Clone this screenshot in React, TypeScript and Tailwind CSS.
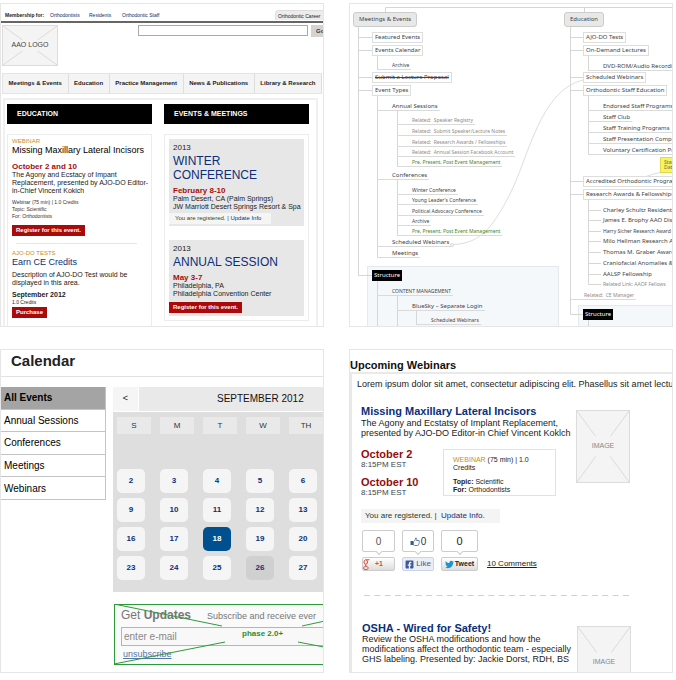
import React from "react";
import { FaFacebookSquare, FaTwitter } from "react-icons/fa";

const ARIAL = "font-['Liberation_Sans',Arial,sans-serif]";

function Thumb({ label, children }: { label: string; children: React.ReactNode }) {
  return (
    <section
      aria-label={label}
      className="relative aspect-square min-h-0 min-w-0 overflow-hidden border border-[#e6e6e6] bg-white"
    >
      {children}
    </section>
  );
}

function Placeholder({ label, className }: { label: string; className: string }) {
  return (
    <div className={`relative flex shrink-0 items-center justify-center border border-[#dcdcdc] bg-[#f4f4f4] ${className}`}>
      <svg className="absolute inset-0 h-full w-full" viewBox="0 0 100 100" preserveAspectRatio="none" aria-hidden="true">
        <path
          d="M0 0L36 36M64 64L100 100M100 0L64 36M36 64L0 100"
          stroke="#dadada"
          strokeWidth="1"
          vectorEffect="non-scaling-stroke"
          fill="none"
        />
      </svg>
      <span className="relative">{label}</span>
    </div>
  );
}

function RedButton({ children, className }: { children: React.ReactNode; className: string }) {
  return (
    <button className={`block h-[11px] bg-[#ab0a0a] px-1 text-[6px] leading-[11px] font-bold text-white ${className}`}>
      {children}
    </button>
  );
}

function HomePage() {
  return (
    <Thumb label="Home page wireframe">
      <div className="flex items-center border-b-2 border-[#666] pt-[6px] pb-px text-[5px] leading-[10px] whitespace-nowrap text-[#0b2f6b]">
        <span className="ml-1 w-[45px] font-bold text-[#222]">Membership for:</span>
        <a href="#orthodontists" className="w-[39px]">Orthodontists</a>
        <a href="#residents" className="w-[33px]">Residents</a>
        <a href="#staff">Orthodontic Staff</a>
        <a href="#careers" className="-mr-1 ml-auto h-[10px] w-[52px] rounded-t-sm border border-b-0 border-[#ddd] bg-[#ececec] pl-[2px] text-[#222]">
          Orthodontic Career
        </a>
      </div>
      <div className="flex items-start pt-[2px]">
        <Placeholder label="AAO LOGO" className="ml-px h-[41px] w-[56px] text-[7px] text-[#444]" />
        <input aria-label="Search" className="ml-[80px] h-[11px] min-w-0 grow border border-[#aaa] bg-white px-1 text-[7px]" />
        <button className="-mr-1 ml-[3px] h-[12px] w-[16px] shrink-0 bg-[#d3d3d3] pl-[5px] text-left text-[6px] font-bold text-[#333]">
          Go
        </button>
      </div>
      <nav className="mt-[7px] mr-px ml-px flex h-[21px] border border-r-0 border-[#e4e4e4] bg-[#f4f4f4] text-[6px] font-bold whitespace-nowrap text-[#222]">
        {["Meetings & Events", "Education", "Practice Management", "News & Publications", "Library & Research"].map((t) => (
          <a key={t} href="#nav" className="flex flex-auto items-center justify-center border-r border-[#dedede] px-1">
            {t}
          </a>
        ))}
      </nav>
      <div className="mt-1 mr-[5px] ml-[2px] grid grid-cols-2 gap-3 border-2 border-[#f0f0f0] pt-1 pr-[7px] pl-[2px]">
        <div>
          <h2 className="h-5 bg-black pl-[10px] text-[7px] leading-[20px] font-bold text-white">EDUCATION</h2>
          <div className="mt-[10px] border border-[#ececec] px-1 pt-[3px] pb-8 text-[#222]">
            <p className="text-[6px] leading-[7px] text-[#c8901a]">WEBINAR</p>
            <h3 className="text-[9px] leading-[10px] whitespace-nowrap text-black">Missing Maxillary Lateral Incisors</h3>
            <p className="mt-[7px] text-[8px] leading-[9px] font-bold text-[#a80c0c]">October 2 and 10</p>
            <p className="text-[7px] leading-[8px] whitespace-nowrap">
              The Agony and Ecstacy of Impant
              <br />
              Replacement, presented by AJO-DO Editor-
              <br />
              in-Chief Vincent Kokich
            </p>
            <p className="mt-1 text-[5px] leading-[7px] text-[#333]">
              Webinar (75 min) | 1.0 Credits
              <br />
              Topic: Scientific
              <br />
              For: Orthodontists
            </p>
            <RedButton className="mt-[5px]">Register for this event.</RedButton>
            <div className="mt-[7px] mr-[10px] ml-1 h-px bg-[#e6e6e6]" />
            <p className="mt-[6px] text-[6px] leading-[7px] text-[#c8901a]">AJO-DO TESTS</p>
            <h3 className="text-[9px] leading-[10px] text-[#0b2f7a]">Earn CE Credits</h3>
            <p className="mt-1 text-[7px] leading-[8px] whitespace-nowrap">
              Description of AJO-DO Test would be
              <br />
              displayed in this area.
            </p>
            <p className="mt-1 text-[7px] leading-[8px] font-bold">September 2012</p>
            <p className="text-[5px] leading-[7px]">1.0 Credits</p>
            <RedButton className="mt-px">Purchase</RedButton>
          </div>
        </div>
        <div>
          <h2 className="h-5 bg-black pl-[10px] text-[7px] leading-[20px] font-bold text-white">EVENTS &amp; MEETINGS</h2>
          <div className="mt-[10px] border border-[#ececec] p-1 text-[7px] leading-[8px] whitespace-nowrap text-[#222]">
            <div className="bg-[#e7e7e7] pt-[5px] pb-[2px]">
              <div className="pl-1">
                <p className="text-[8px] leading-[8px]">2013</p>
                <h3 className="mt-[2px] text-[12px] leading-[14px] text-[#0b2f7a]">
                  WINTER
                  <br />
                  CONFERENCE
                </h3>
                <p className="mt-1 text-[8px] leading-[9px] font-bold text-[#a80c0c]">February 8-10</p>
                <p>Palm Desert, CA (Palm Springs)</p>
                <p>JW Marriott Desert Springs Resort &amp; Spa</p>
              </div>
              <p className="mt-[2px] h-[11px] w-[102px] bg-[#f5f5f5] pl-[6px] text-[6px] leading-[11px] text-[#1f4a1f]">
                You are registered. | <a href="#update" className="text-[#0b2f7a]">Update Info</a>
              </p>
            </div>
            <div className="mt-[14px] bg-[#e7e7e7] pt-[5px] pb-[3px]">
              <div className="pl-1">
                <p className="text-[8px] leading-[8px]">2013</p>
                <h3 className="mt-[2px] text-[12px] leading-[14px] text-[#0b2f7a]">ANNUAL SESSION</h3>
                <p className="mt-1 text-[8px] leading-[9px] font-bold text-[#a80c0c]">May 3-7</p>
                <p>Philadelphia, PA</p>
                <p>Philadelphia Convention Center</p>
              </div>
              <RedButton className="mt-1">Register for this event.</RedButton>
            </div>
          </div>
        </div>
      </div>
    </Thumb>
  );
}

type Kind = "root" | "box" | "struck" | "dark" | "line" | "plain";
type MapNode = { t: string; k: Kind; x: number; y: number; pad?: number; small?: boolean; tone?: "green" | "dim" };

const kindClass: Record<Kind, string> = {
  root: "h-[15px] rounded-[3px] border border-[#ccc] bg-[#e8e8e8] px-[5px] leading-[13px]",
  box: "h-[11px] border border-[#dedede] bg-white px-[2px] leading-[9px]",
  struck: "h-[11px] border border-[#dedede] bg-white px-[2px] leading-[9px] line-through",
  dark: "h-[11px] bg-black px-[2px] leading-[11px] text-white",
  line: "h-[9px] border-b border-[#dadada] pr-[2px] leading-[8px]",
  plain: "h-[8px] leading-[8px]",
};

const nodes: MapNode[] = [
  { t: "Meetings & Events", k: "root", x: 3, y: 8 },
  { t: "Featured Events", k: "box", x: 22, y: 28 },
  { t: "Events Calendar", k: "box", x: 22, y: 41 },
  { t: "Archive", k: "line", x: 27, y: 57, pad: 15, small: true },
  { t: "Submit a Lecture Proposal", k: "struck", x: 22, y: 68 },
  { t: "Event Types", k: "box", x: 22, y: 81 },
  { t: "Annual Sessions", k: "line", x: 27, y: 98, pad: 15 },
  { t: "Related:  Speaker Registry", k: "line", x: 47, y: 112, pad: 15, small: true, tone: "dim" },
  { t: "Related:  Submit Speaker/Lecture Notes", k: "line", x: 47, y: 123, pad: 15, small: true, tone: "dim" },
  { t: "Related:  Research Awards / Fellowships", k: "line", x: 47, y: 134, pad: 15, small: true, tone: "dim" },
  { t: "Related:  Annual Session Facebook Account", k: "line", x: 47, y: 144, pad: 15, small: true, tone: "dim" },
  { t: "Pre, Present, Post Event Management", k: "line", x: 47, y: 154, pad: 15, small: true, tone: "green" },
  { t: "Conferences", k: "line", x: 27, y: 167, pad: 15 },
  { t: "Winter Conference", k: "line", x: 47, y: 182, pad: 15, small: true },
  { t: "Young Leader's Conference", k: "line", x: 47, y: 192, pad: 15, small: true },
  { t: "Political Advocacy Conference", k: "line", x: 47, y: 203, pad: 15, small: true },
  { t: "Archive", k: "line", x: 47, y: 213, pad: 15, small: true },
  { t: "Pre, Present, Post Event Management", k: "line", x: 47, y: 223, pad: 15, small: true, tone: "green" },
  { t: "Scheduled Webinars", k: "line", x: 27, y: 234, pad: 15 },
  { t: "Meetings", k: "line", x: 27, y: 245, pad: 15 },
  { t: "Structure", k: "dark", x: 22, y: 266 },
  { t: "CONTENT MANAGEMENT", k: "line", x: 27, y: 283, pad: 15, small: true },
  { t: "BlueSky – Separate Login", k: "line", x: 47, y: 298, pad: 15 },
  { t: "Scheduled Webinars", k: "line", x: 66, y: 312, pad: 15, small: true },
  { t: "Education", k: "root", x: 214, y: 8 },
  { t: "AJO-DO Tests", k: "box", x: 233, y: 28 },
  { t: "On-Demand Lectures", k: "box", x: 233, y: 41 },
  { t: "DVD-ROM/Audio Recordings", k: "line", x: 238, y: 58, pad: 15 },
  { t: "Scheduled Webinars", k: "box", x: 233, y: 68 },
  { t: "Orthodontic Staff Education", k: "box", x: 233, y: 81 },
  { t: "Endorsed Staff Programs", k: "line", x: 238, y: 98, pad: 15 },
  { t: "Staff Club", k: "line", x: 238, y: 109, pad: 15 },
  { t: "Staff Training Programs", k: "line", x: 238, y: 120, pad: 15 },
  { t: "Staff Presentation Compe", k: "line", x: 238, y: 131, pad: 15 },
  { t: "Voluntary Certification Pro", k: "line", x: 238, y: 142, pad: 15 },
  { t: "Accredited Orthodontic Programs", k: "box", x: 233, y: 172 },
  { t: "Research Awards & Fellowships", k: "box", x: 233, y: 185 },
  { t: "Charley Schultz Resident", k: "plain", x: 253, y: 202 },
  { t: "James E. Brophy AAO Dis", k: "plain", x: 253, y: 212 },
  { t: "Harry Sicher Research Award", k: "plain", x: 253, y: 223, small: true },
  { t: "Milo Hellman Research Aw", k: "plain", x: 253, y: 233 },
  { t: "Thomas M. Graber Award", k: "plain", x: 253, y: 244 },
  { t: "Craniofacial Anomalies & ", k: "plain", x: 253, y: 255 },
  { t: "AALSP Fellowship", k: "plain", x: 253, y: 266 },
  { t: "Related Link: AAOF Fellows", k: "plain", x: 253, y: 276, small: true, tone: "dim" },
  { t: "Related:  CE Manager", k: "line", x: 220, y: 287, pad: 14, small: true, tone: "dim" },
  { t: "Structure", k: "dark", x: 233, y: 305 },
];

function SiteMap() {
  return (
    <Thumb label="Site map">
      <svg className="absolute top-0 left-0" width="322" height="322" fill="none" stroke="#d6d6d6" aria-hidden="true">
        <rect x="17.5" y="262.5" width="191" height="70" fill="#f4f8fb" stroke="#e3e9ee" />
        <rect x="228.5" y="301.5" width="120" height="70" fill="#f4f8fb" stroke="#e3e9ee" />
        <path d="M35.5 8V3.5H322M234.5 3.5V8" />
        <path d="M8.5 23V271.5H22M8.5 33.5H22M8.5 46.5H22M8.5 73.5H22M8.5 86.5H22" />
        <path d="M27.5 52V66M27.5 92V254M47.5 107V163M47.5 176V232" />
        <path d="M27.5 277V322M47.5 292V322M66.5 307V321" />
        <path d="M220.5 23V310.5H233M220.5 33.5H233M220.5 46.5H233M220.5 73.5H233M220.5 86.5H233M220.5 177.5H233M220.5 190.5H233" />
        <path d="M238.5 52V66M238.5 92V151M238.5 196V280.5H251M238.5 206.5H251M238.5 216.5H251M238.5 227.5H251M238.5 237.5H251M238.5 248.5H251M238.5 259.5H251M238.5 270.5H251M238.5 316V322" />
        <path d="M233 76C190 86 178 155 160 190S130 239 104 240.500" stroke="#dedede" />
        <circle cx="102" cy="241" r="1.500" />
        <path d="M297 172L311 168" stroke="#dedede" />
      </svg>
      {nodes.map((n, i) => (
        <div
          key={i}
          className={`absolute font-['Noto_Sans',sans-serif] whitespace-pre ${n.small ? "text-[5px]" : "text-[6px]"} ${
            n.k === "dark" ? "" : n.tone === "green" ? "text-[#4a8528]" : n.tone === "dim" ? "text-[#8c8c8c]" : "text-[#444]"
          } ${kindClass[n.k]}`}
          style={{ left: n.x, top: n.y, paddingLeft: n.pad }}
        >
          {n.t}
        </div>
      ))}
      <div className="absolute top-[153px] left-[310px] h-4 w-5 border border-[#e0d850] bg-[#faf45c] pt-[2px] pl-[3px] font-['Noto_Sans',sans-serif] text-[5px] leading-[5px] text-[#665]">
        Star
        <br />
        Dat
      </div>
    </Thumb>
  );
}

const weeks = [
  [2, 3, 4, 5, 6],
  [9, 10, 11, 12, 13],
  [16, 17, 18, 19, 20],
  [23, 24, 25, 26, 27],
];

function dayClass(d: number) {
  if (d === 18) return "bg-[#00508f] text-white";
  if (d === 26) return "bg-[#d0d0d0] text-[#0b2f7a]";
  return "bg-[#f5f5f5] text-[#0b2f7a]";
}

function CalendarPage() {
  return (
    <Thumb label="Calendar wireframe">
      <h1 className="border-b border-[#e2e2e2] pb-1 pl-[10px] text-[15px] leading-[22px] font-bold text-[#222]">Calendar</h1>
      <div className="flex items-start pt-[10px]">
        <nav className="grid h-[113px] w-[105px] shrink-0 auto-rows-fr border-r border-[#c4c4c4] text-[10px] text-black">
          {["All Events", "Annual Sessions", "Conferences", "Meetings", "Webinars"].map((t, i) => (
            <a
              key={t}
              href="#filter"
              className={`flex items-center border-b border-[#c4c4c4] pl-[3px] ${i === 0 ? "bg-[#a4a4a4] font-bold" : "bg-white"}`}
            >
              {t}
            </a>
          ))}
        </nav>
        <div className="ml-[7px] min-w-0 grow">
          <div className="flex h-6 gap-px">
            <button aria-label="Previous month" className="w-[25px] shrink-0 bg-[#f5f5f5] text-[9px] text-[#222]">
              &lt;
            </button>
            <h2 className="grow bg-[#e9e9e9] pl-[78px] text-[10px] leading-[24px] whitespace-nowrap text-[#111]">SEPTEMBER 2012</h2>
          </div>
          <div className="mt-px overflow-hidden bg-[#dedede] pt-[5px] pb-[7px] pl-1">
            <table className="w-[215px] table-fixed border-collapse">
              <thead>
                <tr className="h-[52px] align-top">
                  {["S", "M", "T", "W", "TH"].map((d) => (
                    <th key={d} className="p-0 text-[8px] font-normal text-[#333]">
                      <div className="h-[17px] w-[34px] bg-[#e9e9e9] leading-[17px]">{d}</div>
                    </th>
                  ))}
                </tr>
              </thead>
              <tbody>
                {weeks.map((w) => (
                  <tr key={w[0]} className="h-[29px] align-top">
                    {w.map((d) => (
                      <td key={d} className="p-0">
                        <button className={`block h-6 w-7 rounded-[5px] text-[8px] leading-[24px] font-bold ${dayClass(d)}`}>{d}</button>
                      </td>
                    ))}
                  </tr>
                ))}
              </tbody>
            </table>
          </div>
          <form className="relative mt-3 -mr-2 ml-px border border-[#2f9a3a] bg-[#fafafa] px-[6px] pt-[3px] pb-1 whitespace-nowrap text-[#777]">
            <p className="flex items-baseline text-[12px] leading-[14px]">
              <span className="w-[86px]">
                Get <b>Updates</b>
              </span>
              <span className="text-[9px]">Subscribe and receive ever</span>
            </p>
            <input
              aria-label="E-mail address"
              placeholder="enter e-mail"
              className="mt-1 block h-[19px] w-[215px] border border-[#b5b5b5] bg-[#f8f8f8] px-[2px] text-[10px] placeholder:text-[#888]"
            />
            <a href="#unsubscribe" className="mt-[3px] block pl-[2px] text-[9px] leading-[11px] text-[#5577a8] underline">
              unsubscribe
            </a>
            <svg className="absolute -top-px -left-px" width="220" height="61" fill="none" stroke="#2f9a3a" aria-hidden="true">
              <path d="M0 0L108 22M0 60L111 38M188 22L220 15M184 38L220 45" />
            </svg>
            <span className="absolute top-[24px] left-[127px] text-[8px] leading-[10px] font-bold text-[#1f922c]">phase 2.0+</span>
          </form>
        </div>
      </div>
    </Thumb>
  );
}

function ThumbUpIcon() {
  return (
    <svg className="shrink-0" width="10" height="9" viewBox="0 0 20 18" aria-hidden="true">
      <path d="M1 8h5v8H1z" fill="#3b5998" />
      <path d="M7 9c3-1 4-4 4-7 2-1 3 2 2 5h5c1 0 1 2 0 3 1 1 0 2 0 3 0 1 0 2-1 2 0 1 0 2-2 2H9l-2-1z" fill="#fff" stroke="#3b5998" strokeWidth="1.500" />
    </svg>
  );
}

function GIcon() {
  return (
    <svg className="shrink-0" width="7" height="11" viewBox="0 0 14 22" fill="none" stroke="#dd4b39" strokeWidth="2" aria-hidden="true">
      <path d="M13 1.500H6.500" />
      <ellipse cx="5.500" cy="6" rx="3.500" ry="4.500" />
      <path d="M6 10.500c-3 2-1 3 2 4.500 4 2 3 6-2 6-4 0-5-1-5-3s3-3.500 6-3.500" />
    </svg>
  );
}

function Bubble({ children, className }: { children: React.ReactNode; className: string }) {
  return (
    <div className={`relative flex h-[22px] items-center justify-center gap-px rounded-[2px] border border-[#ccc] bg-white ${className}`}>
      {children}
      <span className="absolute -bottom-[3px] left-1/2 h-[5px] w-[5px] -translate-x-1/2 rotate-45 border-r border-b border-[#ccc] bg-white" />
    </div>
  );
}

function WebinarsPage() {
  return (
    <Thumb label="Webinars wireframe">
      <h1 className="pt-2 text-[11px] leading-[14px] font-bold text-[#111]">Upcoming Webinars</h1>
      <div className="border-t-2 border-l-2 border-[#e9e9e9] pt-[5px] text-[#222]">
        <p className="pl-[5px] text-[9px] leading-[10px] whitespace-nowrap">
          Lorem ipsum dolor sit amet, consectetur adipiscing elit. Phasellus sit amet lectus
        </p>
        <article className="mt-4 pl-[9px]">
          <div className="flex">
            <div className="w-[215px] shrink-0 whitespace-nowrap">
              <h2 className="text-[11px] leading-[12px] font-bold text-[#0b2f7a]">Missing Maxillary Lateral Incisors</h2>
              <p className="mt-px text-[9px] leading-[10px]">
                The Agony and Ecstatsy of Implant Replacement,
                <br />
                presented by AJO-DO Editor-in Chief Vincent Koklch
              </p>
              <div className="mt-[10px] flex">
                <div className="w-[82px] text-[8px] leading-[10px] text-[#444]">
                  <p className="text-[11px] leading-[12px] font-bold text-[#960b0b]">October 2</p>
                  <p>8:15PM EST</p>
                  <p className="mt-[6px] text-[11px] leading-[12px] font-bold text-[#960b0b]">October 10</p>
                  <p>8:15PM EST</p>
                </div>
                <div className="mt-px h-[47px] w-[113px] border border-[#e2e2e2] pt-[6px] pl-[9px] text-[7px] leading-[8px]">
                  <p>
                    <span className="text-[#c8901a]">WEBINAR</span> (75 min) | 1.0
                    <br />
                    Credits
                  </p>
                  <p className="mt-[6px]">
                    <b>Topic:</b> Scientific
                    <br />
                    <b>For:</b> Orthodontists
                  </p>
                </div>
              </div>
            </div>
            <Placeholder label="IMAGE" className="mt-[5px] h-[73px] w-[54px] text-[7px] text-[#888]" />
          </div>
          <p className="mt-[11px] h-[14px] w-[139px] bg-[#f4f4f4] pl-1 text-[8px] leading-[14px] text-[#1f3f1f]">
            You are registered. |&nbsp; <a href="#update" className="text-[#0b2f7a]">Update Info.</a>
          </p>
          <div className="mt-[7px] flex items-end gap-[7px] pl-px text-[8px]">
            <div className="w-[33px]">
              <Bubble className="text-[10px] text-[#555]">0</Bubble>
              <button className="mt-[5px] flex h-[14px] w-full items-center gap-[5px] rounded-[2px] border border-[#ccc] bg-gradient-to-b from-white to-[#ddd] text-[7px] font-bold text-[#dd4b39]">
                <GIcon />
                +1
              </button>
            </div>
            <div className="w-[32px]">
              <Bubble className="text-[10px] text-[#333]">
                <ThumbUpIcon />0
              </Bubble>
              <button className="mt-[5px] flex h-[14px] w-full items-center justify-center gap-[2px] rounded-[2px] border border-[#cad4e7] bg-[#eceef5] text-[8px] text-[#3b5998]">
                <FaFacebookSquare size={9} className="shrink-0" />
                Like
              </button>
            </div>
            <div className="w-[37px]">
              <Bubble className="text-[11px] text-[#222]">0</Bubble>
              <button className="mt-[5px] flex h-[14px] w-full items-center justify-center gap-px rounded-[2px] border border-[#ccc] bg-gradient-to-b from-white to-[#ddd] text-[7px] font-bold text-[#222]">
                <FaTwitter size={9} color="#1a94d2" className="shrink-0" />
                Tweet
              </button>
            </div>
            <a href="#comments" className="ml-[2px] leading-[14px] text-[#222] underline">
              10 Comments
            </a>
          </div>
        </article>
        <svg className="mt-6 ml-[12px] block" width="265" height="1" aria-hidden="true">
          <path d="M0 0.500H265" stroke="#d0d0d0" strokeDasharray="6 4.360" />
        </svg>
        <article className="mt-[26px] flex pl-[10px]">
          <div className="w-[215px] shrink-0 whitespace-nowrap">
            <h2 className="text-[11px] leading-[12px] font-bold text-[#0b2f7a]">OSHA - Wired for Safety!</h2>
            <p className="text-[9px] leading-[10px]">
              Review the OSHA modifications and how the
              <br />
              modifications affect the orthodontic team - especially
              <br />
              GHS labeling. Presented by: Jackie Dorst, RDH, BS
            </p>
          </div>
          <Placeholder label="IMAGE" className="mt-1 h-[73px] w-[54px] text-[7px] text-[#888]" />
        </article>
      </div>
    </Thumb>
  );
}

export default function App() {
  return (
    <main className={`grid grid-cols-2 items-start gap-x-[25px] gap-y-[22px] bg-white pt-[3px] pr-[3px] pb-[7px] ${ARIAL}`}>
      <HomePage />
      <SiteMap />
      <CalendarPage />
      <WebinarsPage />
    </main>
  );
}
